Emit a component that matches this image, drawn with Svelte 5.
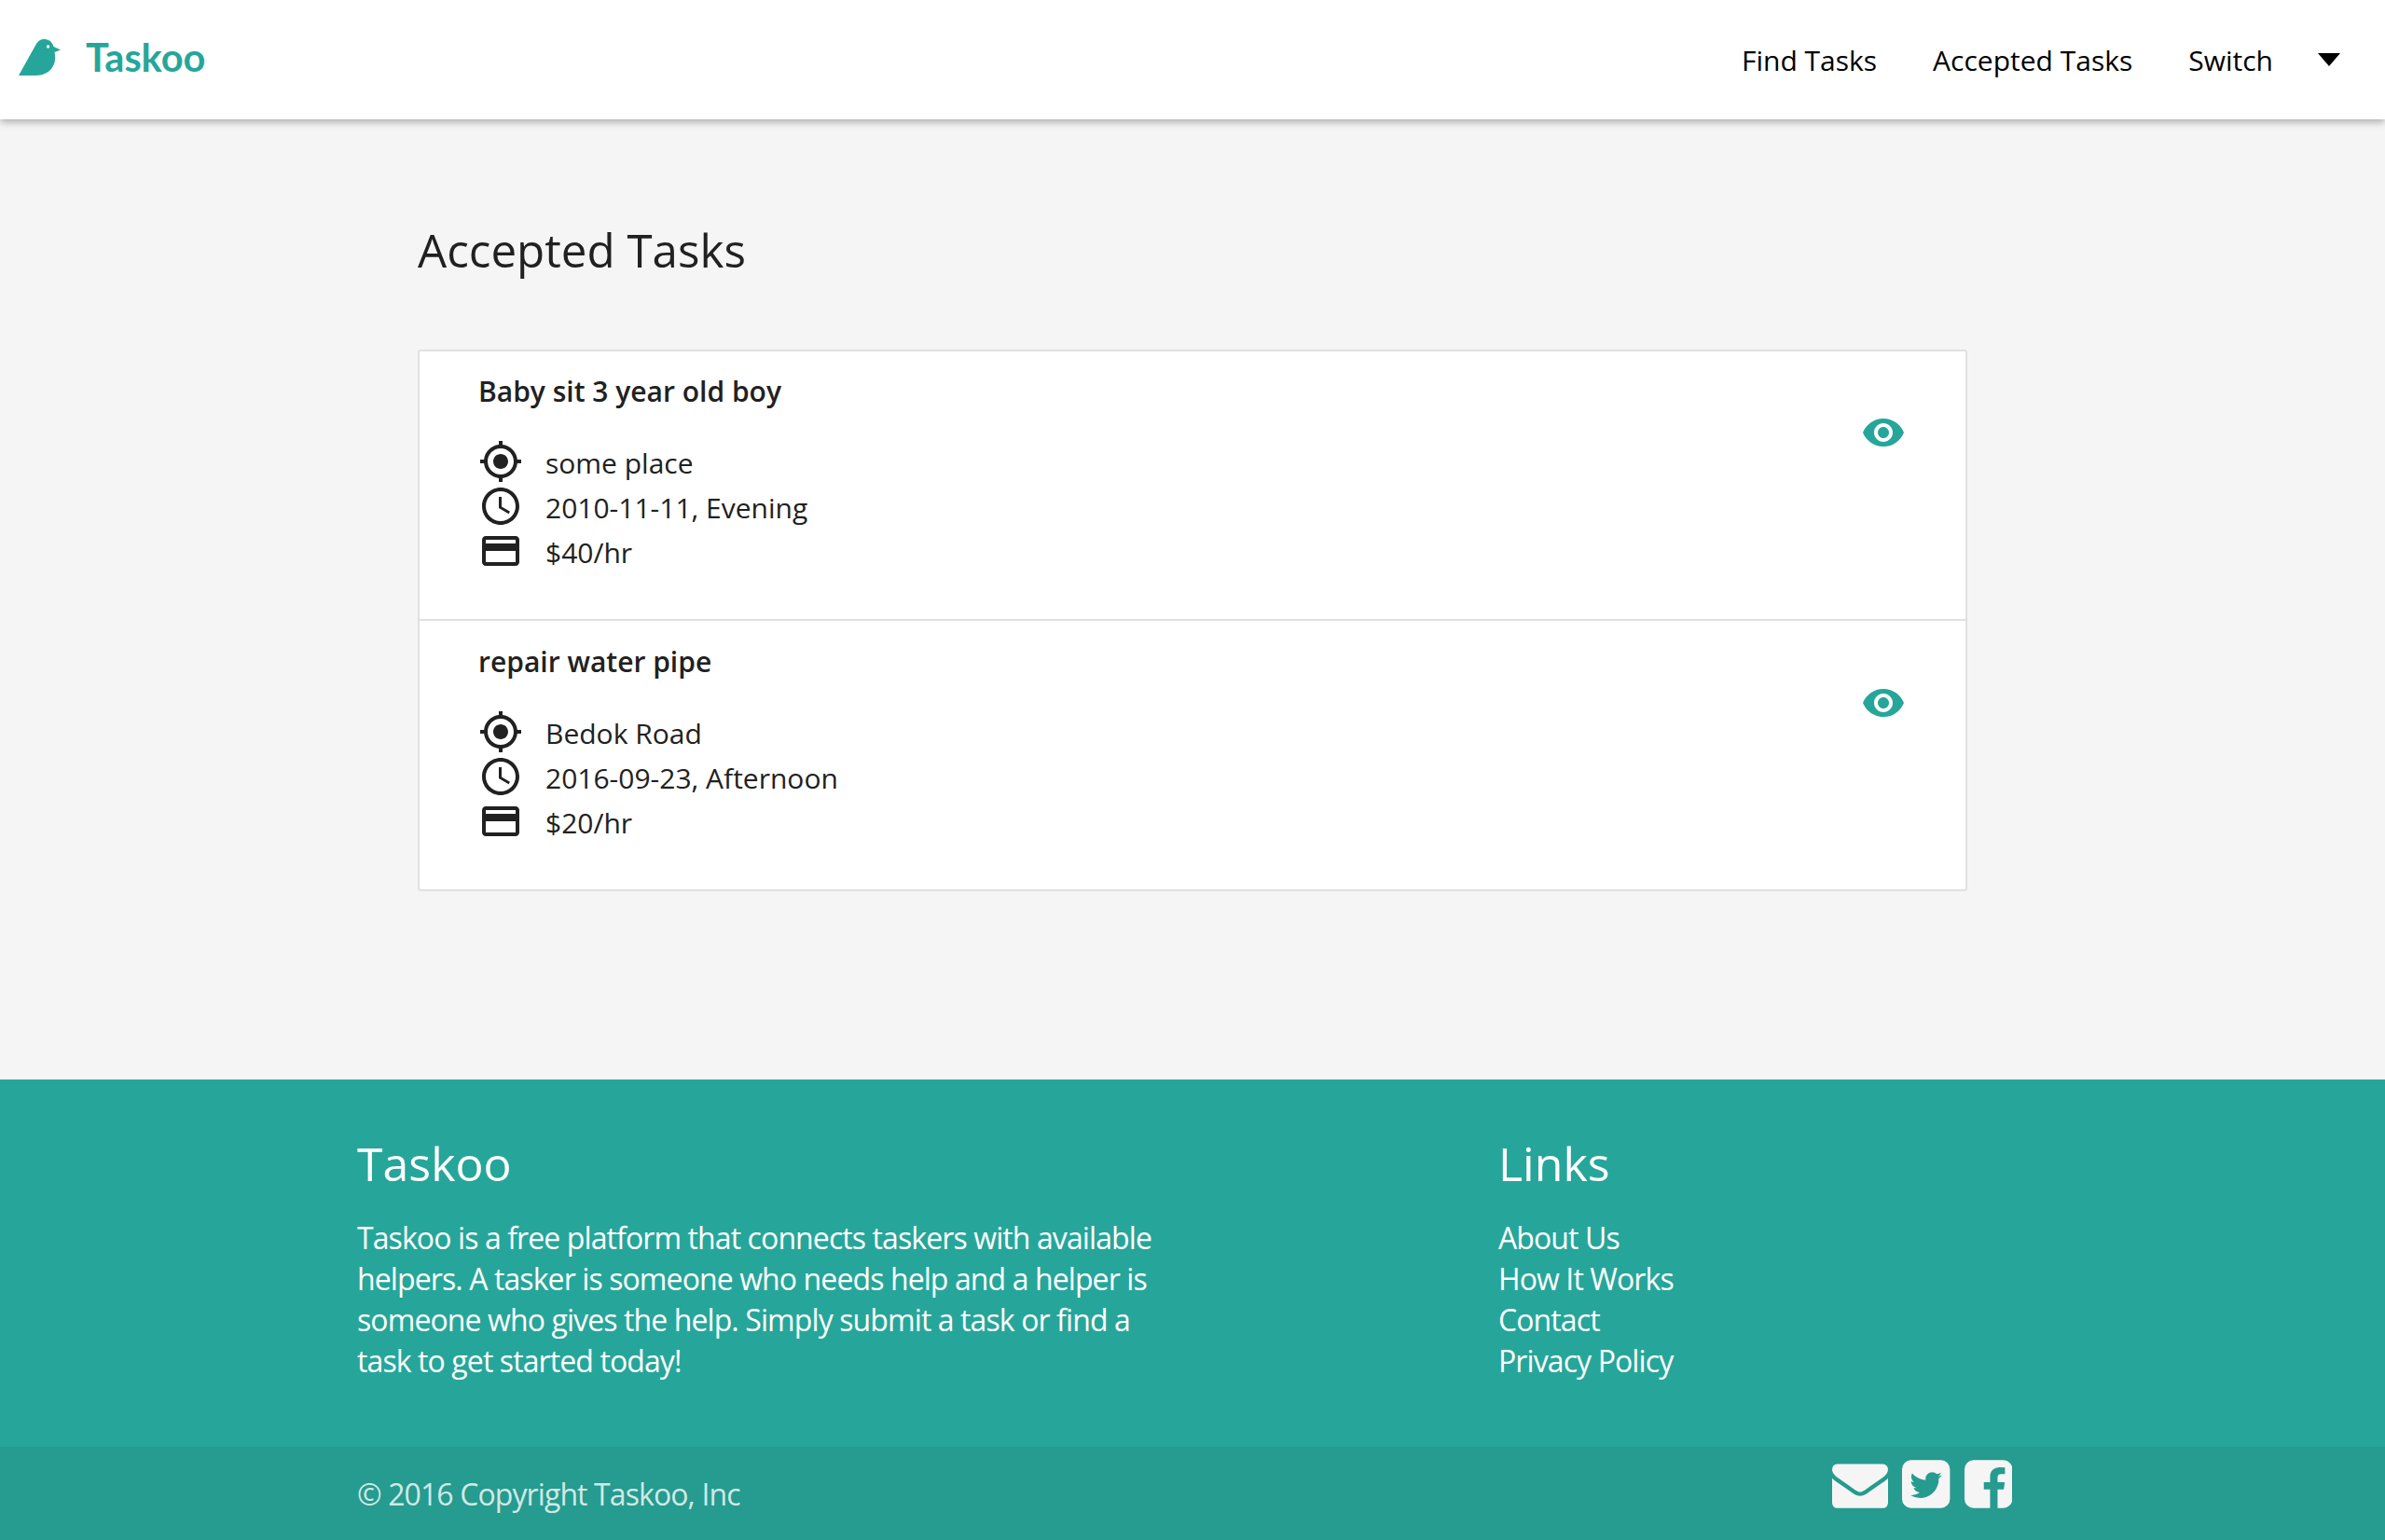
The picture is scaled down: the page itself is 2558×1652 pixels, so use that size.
<script>
	const tasks = [
		{ title: 'Baby sit 3 year old boy', place: 'some place', when: '2010-11-11, Evening', pay: '$40/hr' },
		{ title: 'repair water pipe', place: 'Bedok Road', when: '2016-09-23, Afternoon', pay: '$20/hr' }
	];
	const links = ['About Us', 'How It Works', 'Contact', 'Privacy Policy'];
</script>

{#snippet icon(d)}
	<svg class="row-icon" viewBox="0 0 24 24" width="48" height="48"><path {d} /></svg>
{/snippet}

<header class="nav">
	<a class="brand" href="#top">
		<svg class="bird" viewBox="0 0 45 39" width="45" height="39">
			<path d="M0 39 L19 5 C22 0 27 -1 32 1 C35 2.500 36.500 5 37.500 8 L45 11.500 L38.500 14 C40 21 39 28 34 33 C29 38 23 39 16 39 Z" />
			<circle cx="31.500" cy="8" r="1.700" fill="#fff" />
		</svg>
		<span>Taskoo</span>
	</a>
	<nav class="menu">
		<a href="#find">Find Tasks</a>
		<a href="#accepted">Accepted Tasks</a>
		<a href="#switch">Switch</a>
		<span class="caret"></span>
	</nav>
</header>

<main class="main">
	<h1>Accepted Tasks</h1>
	<div class="card">
		{#each tasks as task}
			<article class="task">
				<div class="info">
					<h2>{task.title}</h2>
					<div class="row">
						{@render icon('M12 8c-2.21 0-4 1.79-4 4s1.79 4 4 4 4-1.79 4-4-1.79-4-4-4zm8.94 3c-.46-4.17-3.77-7.48-7.94-7.94V1h-2v2.06C6.83 3.52 3.52 6.83 3.06 11H1v2h2.06c.46 4.17 3.77 7.48 7.94 7.94V23h2v-2.06c4.17-.46 7.48-3.77 7.94-7.94H23v-2h-2.06zM12 19c-3.87 0-7-3.13-7-7s3.13-7 7-7 7 3.13 7 7-3.13 7-7 7z')}
						<span>{task.place}</span>
					</div>
					<div class="row">
						{@render icon('M11.99 2C6.47 2 2 6.48 2 12s4.47 10 9.99 10C17.52 22 22 17.52 22 12S17.52 2 11.99 2zM12 20c-4.42 0-8-3.58-8-8s3.58-8 8-8 8 3.58 8 8-3.58 8-8 8zm.5-13H11v6l5.25 3.15.75-1.23-4.5-2.67z')}
						<span>{task.when}</span>
					</div>
					<div class="row">
						{@render icon('M20 4H4c-1.11 0-1.99.89-1.99 2L2 18c0 1.11.89 2 2 2h16c1.11 0 2-.89 2-2V6c0-1.11-.89-2-2-2zm0 14H4v-6h16v6zm0-10H4V6h16v2z')}
						<span>{task.pay}</span>
					</div>
				</div>
				<svg class="eye" viewBox="0 0 24 24" width="48" height="48">
					<path d="M12 4.500C7 4.500 2.730 7.610 1 12c1.730 4.390 6 7.500 11 7.500s9.270-3.110 11-7.500c-1.730-4.390-6-7.500-11-7.500zM12 17c-2.760 0-5-2.240-5-5s2.240-5 5-5 5 2.240 5 5-2.240 5-5 5zm0-8c-1.660 0-3 1.340-3 3s1.340 3 3 3 3-1.340 3-3-1.340-3-3-3z" />
				</svg>
			</article>
		{/each}
	</div>
</main>

<footer class="footer">
	<div class="footer-top">
		<div class="about">
			<h3>Taskoo</h3>
			<p>Taskoo is a free platform that connects taskers with available helpers. A tasker is someone who needs help and a helper is someone who gives the help. Simply submit a task or find a task to get started today!</p>
		</div>
		<div class="links">
			<h3>Links</h3>
			{#each links as link}
				<a href="#link">{link}</a>
			{/each}
		</div>
	</div>
	<div class="footer-bottom">
		<div class="footer-bottom-inner">
			<span class="copy">© 2016 Copyright Taskoo, Inc</span>
			<div class="social">
				<svg viewBox="0 0 1792 1792" width="60" height="60"><path d="M1792 710v794q0 66-47 113t-113 47h-1472q-66 0-113-47t-47-113v-794q44 49 101 87 362 246 497 345 57 42 92.500 65.500t94.500 48 110 24.500h2q51 0 110-24.500t94.500-48 92.500-65.500q170-123 498-345 57-39 100-87zm0-294q0 79-49 151t-122 123q-376 261-468 325-10 7-42.500 30.500t-54 38-52 32.500-57.500 27-50 9h-2q-23 0-50-9t-57.500-27-52-32.500-54-38-42.500-30.500q-91-64-262-182.500t-205-142.500q-62-42-117-115.500t-55-136.500q0-78 41.500-130t118.500-52h1472q65 0 112.500 47t47.500 113z" /></svg>
				<svg viewBox="128 0 1536 1792" width="51.400" height="60"><path d="M1408 610q-56 25-121 34 68-40 93-117-65 38-134 51-61-66-153-66-87 0-148.500 61.500t-61.500 148.500q0 29 5 48-129-7-242-65t-192-155q-29 50-29 106 0 114 91 175-47-1-100-26v2q0 75 50 133.500t123 72.500q-29 8-51 8-13 0-39-4 21 63 74.500 104t121.500 42q-116 90-261 90-26 0-50-3 148 94 322 94 112 0 210-35.500t168-95 120.500-137 75-162 24.500-168.500q0-18-1-27 63-45 105-109zm256-194v960q0 119-84.500 203.500t-203.500 84.500h-960q-119 0-203.500-84.500t-84.500-203.500v-960q0-119 84.500-203.500t203.500-84.500h960q119 0 203.500 84.500t84.500 203.500z" /></svg>
				<svg viewBox="128 0 1536 1792" width="51.400" height="60"><path d="M1376 128q119 0 203.500 84.500t84.500 203.500v960q0 119-84.500 203.500t-203.500 84.500h-188v-595h199l30-232h-229v-148q0-56 23.500-84t91.500-28l122-1v-207q-63-9-178-9-136 0-217.500 80t-81.500 226v171h-200v232h200v595h-532q-119 0-203.500-84.500t-84.500-203.500v-960q0-119 84.500-203.500t203.500-84.500h960z" /></svg>
			</div>
		</div>
	</div>
</footer>

<style>
	:global(body) {
		margin: 0;
		background: #f5f5f5;
		color: #212121;
		font-family: 'Open Sans', 'Noto Sans', sans-serif;
		font-size: 30px;
	}

	a {
		color: inherit;
		text-decoration: none;
	}

	.nav {
		display: flex;
		align-items: center;
		justify-content: space-between;
		height: 128px;
		padding: 0 48px 0 20px;
		box-sizing: border-box;
		background: #fff;
		box-shadow: 0 3px 8px rgba(0, 0, 0, 0.3);
		position: relative;
	}

	.brand {
		display: flex;
		align-items: center;
		gap: 27px;
		margin-top: -6px;
		color: #26a69a;
		font-family: Lato, sans-serif;
		font-size: 41.500px;
		font-weight: 700;
	}

	.bird {
		fill: #26a69a;
	}

	.menu {
		display: flex;
		align-items: center;
		gap: 60px;
		color: #000;
	}

	.caret {
		margin-left: -12px;
		border-left: 12px solid transparent;
		border-right: 12px solid transparent;
		border-top: 14px solid #000;
	}

	.main {
		width: 1662px;
		margin: 0 auto;
		padding: 102px 0 202px;
	}

	h1 {
		margin: 0 0 69px;
		font-size: 49.300px;
		line-height: 76px;
		font-weight: 400;
	}

	.card {
		background: #fff;
		border: 2px solid #e0e0e0;
		border-radius: 3px;
	}

	.task {
		display: flex;
		justify-content: space-between;
		height: 287px;
		padding: 0 64px 0 63px;
	}

	.task + .task {
		padding-top: 1px;
		border-top: 2px solid #e0e0e0;
	}

	h2 {
		margin: 19px 0 27px;
		font-size: 30px;
		line-height: 48px;
		font-weight: 600;
	}

	.row {
		display: flex;
		gap: 24px;
		height: 48px;
		line-height: 52px;
	}

	.row-icon {
		fill: #212121;
		flex: none;
	}

	.eye {
		fill: #26a69a;
		margin-top: 63px;
	}

	.footer {
		background: #26a69a;
		color: #fff;
	}

	.footer-top {
		display: grid;
		grid-template-columns: 1224px 1fr;
		width: 1792px;
		height: 394px;
		margin: 0 auto;
		padding-top: 58px;
		box-sizing: border-box;
		font-size: 32px;
		line-height: 44px;
		letter-spacing: -0.900px;
	}

	.about p {
		margin: 0;
		width: 870px;
	}

	h3 {
		margin: 0 0 26px;
		font-size: 50px;
		line-height: 64px;
		font-weight: 400;
		letter-spacing: 0;
	}

	.links {
		display: flex;
		flex-direction: column;
	}

	.footer-bottom {
		height: 100px;
		background: #269b8f;
	}

	.footer-bottom-inner {
		display: flex;
		justify-content: space-between;
		width: 1792px;
		margin: 0 auto;
		padding-right: 17px;
		box-sizing: border-box;
	}

	.copy {
		margin-top: 29px;
		font-size: 32px;
		line-height: 44px;
		letter-spacing: -0.900px;
		color: rgba(255, 255, 255, 0.8);
	}

	.social {
		display: flex;
		gap: 15px;
		margin-top: 10px;
		fill: #f5f5f5;
	}
</style>
